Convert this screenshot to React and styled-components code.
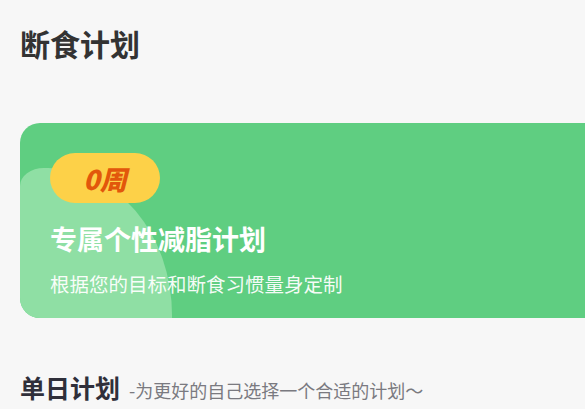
import styled, { createGlobalStyle } from "styled-components";

const GlobalStyle = createGlobalStyle`
  html, body {
    margin: 0;
    padding: 0;
    background: #f7f7f7;
    overflow: hidden;
  }
  body {
    font-family: "Noto Sans CJK SC", "Noto Sans", sans-serif;
  }
`;

function App() {
  return (
    <Page>
      <GlobalStyle />
      <PageTitle>断食计划</PageTitle>

      <PlanCard>
        <Blob />
        <CardBody>
          <WeekBadge>0周</WeekBadge>
          <CardTitle>专属个性减脂计划</CardTitle>
          <CardDesc>根据您的目标和断食习惯量身定制</CardDesc>
        </CardBody>
      </PlanCard>

      <SectionHead>
        <SectionTitle>单日计划</SectionTitle>
        <SectionSub>-为更好的自己选择一个合适的计划～</SectionSub>
      </SectionHead>
    </Page>
  );
}

export default App;

const Page = styled.div`
  width: 585px;
  height: 409px;
  box-sizing: border-box;
  padding: 22px 0 0 20px;
  overflow: hidden;
`;

const PageTitle = styled.div`
  font-size: 30px;
  line-height: 42px;
  font-weight: 700;
  color: #333333;
`;

const PlanCard = styled.div`
  position: relative;
  margin-top: 59px;
  width: 620px;
  height: 195px;
  border-radius: 20px;
  background: #5fce81;
  overflow: hidden;
`;

const Blob = styled.div`
  position: absolute;
  left: 0;
  bottom: 0;
  width: 152px;
  height: 150px;
  background: #8fdfa4;
  border-top-left-radius: 24px 18px;
  border-top-right-radius: 124px 147px;
`;

const CardBody = styled.div`
  position: relative;
  display: flex;
  flex-direction: column;
  align-items: flex-start;
  padding: 30px 0 0 30px;
`;

const WeekBadge = styled.div`
  width: 110px;
  height: 50px;
  border-radius: 25px;
  background: #fdd148;
  display: flex;
  align-items: center;
  justify-content: center;
  color: #e2570b;
  font-size: 27px;
  font-weight: 900;
  font-style: italic;
`;

const CardTitle = styled.div`
  margin-top: 18px;
  font-size: 27px;
  line-height: 36px;
  font-weight: 700;
  color: #ffffff;
`;

const CardDesc = styled.div`
  margin-top: 14px;
  font-size: 19.5px;
  line-height: 26px;
  color: rgba(255, 255, 255, 0.95);
`;

const SectionHead = styled.div`
  margin-top: 52px;
  display: flex;
  align-items: baseline;
  gap: 9px;
`;

const SectionTitle = styled.div`
  font-size: 25px;
  line-height: 35px;
  font-weight: 700;
  color: #2f2f3a;
`;

const SectionSub = styled.div`
  font-size: 18px;
  color: #7a7a80;
`;
